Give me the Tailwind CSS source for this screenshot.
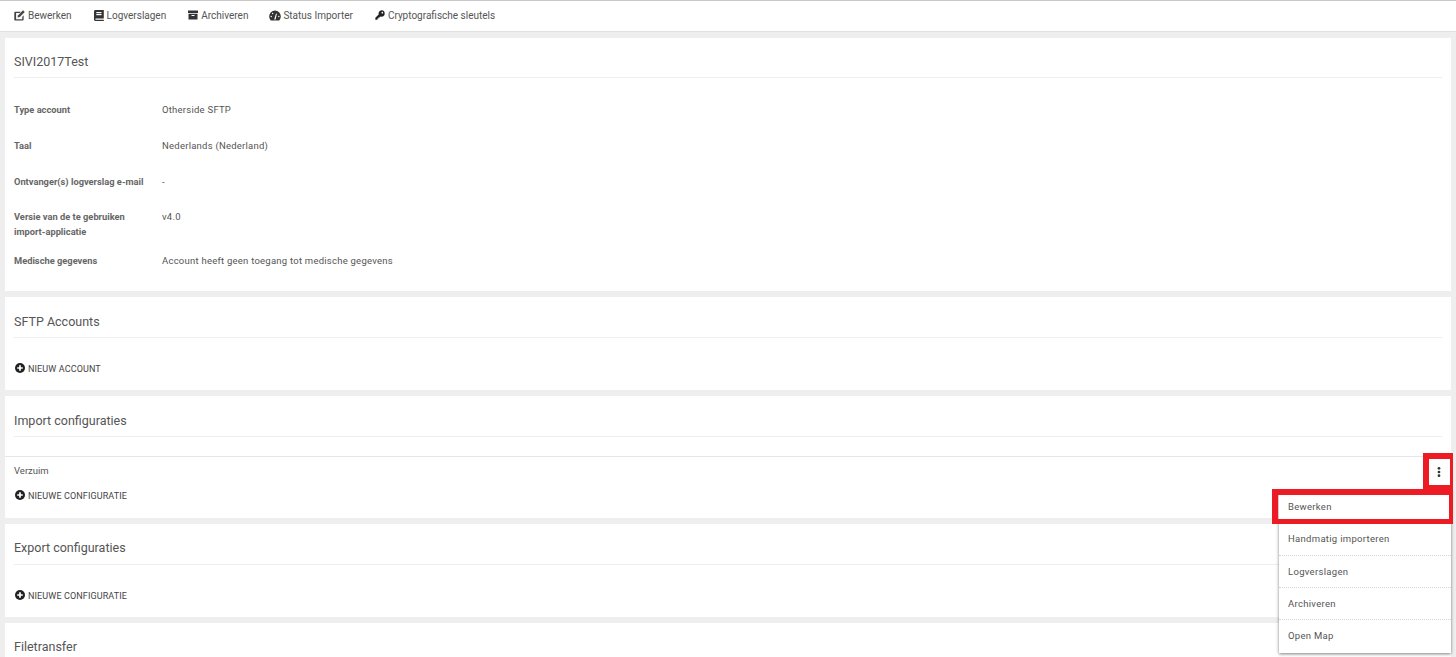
<!DOCTYPE html>
<html lang="en">
<head>
    <meta charset="UTF-8">
    <meta name="viewport" content="width=device-width, initial-scale=1.0">
    <title>SIVI2017Test</title>
    <script src="https://cdn.jsdelivr.net/npm/@tailwindcss/browser@4"></script>
</head>
<body class="bg-[#eeeeee] font-['Roboto',sans-serif] text-[#444444] overflow-hidden">
    <div class="relative h-[657px] w-[1456px] overflow-hidden">
        <!-- Toolbar -->
        <div class="h-[32px] bg-white border-t border-[#c8c8c8] border-b-[#e0e0e0] border-b flex items-center pl-[14px] pb-[2px] gap-[22px] text-[10px] text-[#555555]">
            <div class="flex items-center gap-[3px]">
                <svg class="w-[11px] h-[11px]" viewBox="0 0 12 12" fill="#444"><path d="M1.500 1.800H7.500L6.200 3.300H2.300V10H9V7.300L10.500 5.800V10.300c0 .7-.5 1.200-1.200 1.200H1.500C.8 11.500.3 11 .3 10.300V3c0-.7.5-1.200 1.200-1.200z"/><path d="M9.900.3l1.800 1.800-5.400 5.400-2.500.7.700-2.500z"/></svg>
                <span>Bewerken</span>
            </div>
            <div class="flex items-center gap-[3px]">
                <svg class="w-[10px] h-[11px]" viewBox="0 0 10 11" fill="#333"><path d="M1.500 0H9.800V8.500H2c-.5 0-.8.3-.8.6s.3.7.8.7h7.800V11H1.500C.6 11 0 10.300 0 9.500V1.500C0 .7.600 0 1.500 0z"/><rect x="2.300" y="2" width="5.200" height="1.200" fill="#fff"/><rect x="2.300" y="4" width="5.200" height="1.200" fill="#fff"/></svg>
                <span>Logverslagen</span>
            </div>
            <div class="flex items-center gap-[3px]">
                <svg class="w-[10px] h-[10px]" viewBox="0 0 10 10" fill="#333"><rect x="0" y="0.500" width="10" height="2.500"/><path d="M.5 3.700h9v5.800h-9zM3.500 5v1h3V5z" fill-rule="evenodd"/></svg>
                <span>Archiveren</span>
            </div>
            <div class="flex items-center gap-[2px] -ml-[1px]">
                <svg class="w-[12px] h-[11px]" viewBox="0 0 12 11"><path d="M6 .5A5.800 5.800 0 0 0 .2 6.300c0 1.700.6 3.200 1.600 4.200h8.400c1-1 1.600-2.500 1.600-4.200A5.800 5.800 0 0 0 6 .5z" fill="#333"/><path d="M5.200 9.500L7 3.400l.9.3-1.300 5.800z" fill="#fff"/><circle cx="2.200" cy="6.500" r=".7" fill="#fff"/><circle cx="3.600" cy="3.500" r=".7" fill="#fff"/><circle cx="9.800" cy="6.500" r=".7" fill="#fff"/></svg>
                <span>Status Importer</span>
            </div>
            <div class="flex items-center gap-[3px]">
                <svg class="w-[10px] h-[10px]" viewBox="0 0 12 12"><path d="M7.800.4a3.800 3.800 0 0 1 0 7.600c-.4 0-.8-.1-1.200-.2L5.400 9H4.200v1.200H3v1.400H.4V9.300l4-4A3.800 3.800 0 0 1 7.800.4z" fill="#222"/><circle cx="8.800" cy="3.200" r="1" fill="#fff"/></svg>
                <span>Cryptografische sleutels</span>
            </div>
        </div>

        <div class="flex flex-col gap-[6px] pt-[6px] pl-[5px] pr-[5px]">
            <!-- General info -->
            <section class="bg-white h-[253px] px-[9px]">
                <h2 class="h-[40px] pt-[15px] text-[12.500px] leading-[18px] text-[#555555] border-b border-[#eeeeee]">SIVI2017Test</h2>
                <div class="pt-[24px] text-[9.500px] leading-[15px] text-[#555555]">
                    <div class="flex h-[36px]">
                        <div class="w-[148px] text-[9.300px] font-bold text-[#666666]">Type account</div>
                        <div class="tracking-[0.24px]">Otherside SFTP</div>
                    </div>
                    <div class="flex h-[36px]">
                        <div class="w-[148px] text-[9.300px] font-bold text-[#666666]">Taal</div>
                        <div class="tracking-[0.24px]">Nederlands (Nederland)</div>
                    </div>
                    <div class="flex h-[35px]">
                        <div class="w-[148px] text-[9.300px] font-bold text-[#666666]">Ontvanger(s) logverslag e-mail</div>
                        <div class="tracking-[0.24px]">-</div>
                    </div>
                    <div class="flex h-[44px]">
                        <div class="w-[148px] text-[9.300px] font-bold text-[#666666]">Versie van de te gebruiken<br>import-applicatie</div>
                        <div class="tracking-[0.24px]">v4.0</div>
                    </div>
                    <div class="flex">
                        <div class="w-[148px] text-[9.300px] font-bold text-[#666666]">Medische gegevens</div>
                        <div class="tracking-[0.24px]">Account heeft geen toegang tot medische gegevens</div>
                    </div>
                </div>
            </section>

            <!-- SFTP accounts -->
            <section class="bg-white h-[93px] px-[9px]">
                <h2 class="h-[41px] pt-[16px] text-[12.500px] leading-[18px] text-[#555555] border-b border-[#eeeeee]">SFTP Accounts</h2>
                <div class="mt-[25px] ml-[1px] flex items-center gap-[3px] text-[9px] leading-[12px] tracking-[0.12px] text-[#444444]">
                    <svg class="w-[10px] h-[10px] -translate-y-[1px]" viewBox="0 0 10 10"><circle cx="5" cy="5" r="5" fill="#222"/><path d="M2.200 5h5.600M5 2.200v5.600" stroke="#fff" stroke-width="1.700"/></svg>
                    <span>NIEUW ACCOUNT</span>
                </div>
            </section>

            <!-- Import configuraties -->
            <section class="bg-white h-[122px]">
                <h2 class="h-[41px] mx-[9px] pt-[16px] text-[12.500px] leading-[18px] text-[#555555] border-b border-[#eeeeee]">Import configuraties</h2>
                <div class="mt-[19px] border-t border-[#e6e6e6] px-[9px] pt-[8px] text-[9.500px] leading-[12px] text-[#555555]">Verzuim</div>
                <div class="mt-[13px] ml-[10px] flex items-center gap-[3px] text-[9px] leading-[12px] tracking-[0.12px] text-[#444444]">
                    <svg class="w-[10px] h-[10px] -translate-y-[1px]" viewBox="0 0 10 10"><circle cx="5" cy="5" r="5" fill="#222"/><path d="M2.200 5h5.600M5 2.200v5.600" stroke="#fff" stroke-width="1.700"/></svg>
                    <span>NIEUWE CONFIGURATIE</span>
                </div>
            </section>

            <!-- Export configuraties -->
            <section class="bg-white h-[93px] px-[9px]">
                <h2 class="h-[41px] pt-[15px] text-[12.500px] leading-[18px] text-[#555555] border-b border-[#eeeeee]">Export configuraties</h2>
                <div class="mt-[25px] ml-[1px] flex items-center gap-[3px] text-[9px] leading-[12px] tracking-[0.12px] text-[#444444]">
                    <svg class="w-[10px] h-[10px] -translate-y-[1px]" viewBox="0 0 10 10"><circle cx="5" cy="5" r="5" fill="#222"/><path d="M2.200 5h5.600M5 2.200v5.600" stroke="#fff" stroke-width="1.700"/></svg>
                    <span>NIEUWE CONFIGURATIE</span>
                </div>
            </section>

            <!-- Filetransfer -->
            <section class="bg-white h-[60px] px-[9px]">
                <h2 class="pt-[15px] text-[12.500px] leading-[18px] text-[#555555]">Filetransfer</h2>
            </section>
        </div>

        <!-- Dropdown menu -->
        <div class="absolute left-[1279px] top-[491px] w-[172px] h-[162px] bg-white shadow-[0_1px_3px_rgba(0,0,0,0.5)] text-[9.500px] tracking-[0.3px] text-[#555555]">
            <div class="h-[33px] pl-[9px] flex items-center">Bewerken</div>
            <div class="h-[32px] pl-[9px] flex items-center border-b border-dotted border-[#d4d4d4]">Handmatig importeren</div>
            <div class="h-[32px] pl-[9px] pt-[2px] flex items-center border-b border-dotted border-[#d4d4d4]">Logverslagen</div>
            <div class="h-[32px] pl-[9px] pt-[2px] flex items-center border-b border-dotted border-[#d4d4d4]">Archiveren</div>
            <div class="h-[32px] pl-[9px] flex items-center">Open Map</div>
        </div>

        <!-- Red highlight on the kebab button -->
        <div class="absolute left-[1423px] top-[453px] w-[30px] h-[38px] border-[6px] border-r-[3px] border-[#ed1c24] bg-white flex items-center justify-center pr-[1px]">
            <svg class="w-[4px] h-[10px]" viewBox="0 0 4 11" fill="#333"><circle cx="2" cy="1.500" r="1.500"/><circle cx="2" cy="5.500" r="1.500"/><circle cx="2" cy="9.500" r="1.500"/></svg>
        </div>
        <!-- Red highlight on the first menu item -->
        <div class="absolute left-[1272px] top-[489px] w-[181px] h-[35px] border-[6px] border-r-[4px] border-b-[5px] border-[#ed1c24]"></div>
    </div>
</body>
</html>
